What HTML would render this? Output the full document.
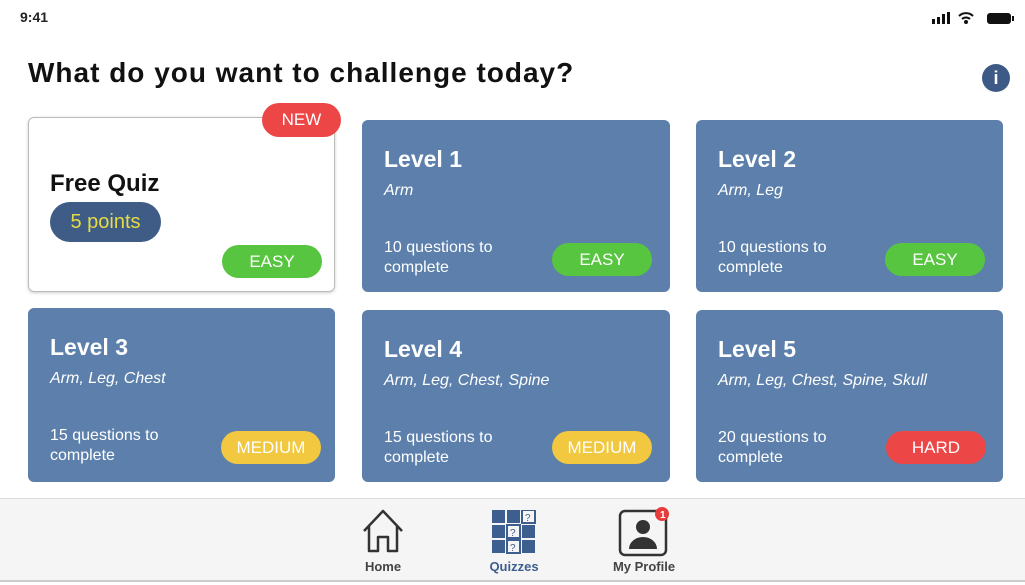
<!DOCTYPE html>
<html><head><style>
*{margin:0;padding:0;box-sizing:border-box}
body{width:1025px;height:585px;background:#fff;font-family:"Liberation Sans",sans-serif;position:relative;overflow:hidden}
.abs{position:absolute}
.card{position:absolute;background:#5c80ab;border-radius:6px;color:#fff}
.card h2{position:absolute;left:22px;top:26px;font-size:23px;font-weight:bold}
.card i{position:absolute;left:22px;top:62px;font-size:16px}
.card .q{position:absolute;left:22px;top:118px;font-size:16px;line-height:20px}
.pill{position:absolute;border-radius:17px;height:33px;width:100px;text-align:center;line-height:33px;font-size:17px;color:#fff}
.easy{background:#57c540}.med{background:#f1c83f}.hard{background:#ec4646}
.nav{position:absolute;left:0;top:498px;width:1025px;height:84px;background:#f5f5f5;border-top:1px solid #ddd;border-bottom:2px solid #ccc}
.nl{position:absolute;top:60px;font-size:13px;font-weight:bold;color:#444;width:100px;text-align:center}
</style></head><body>
<div class="abs" style="left:20px;top:9px;font-size:14px;font-weight:bold;color:#222">9:41</div>
<svg class="abs" style="left:930px;top:10px" width="88" height="16">
<rect x="2" y="9" width="3" height="5" fill="#111"/><rect x="7" y="7" width="3" height="7" fill="#111"/><rect x="12" y="4" width="3" height="10" fill="#111"/><rect x="17" y="2" width="3" height="12" fill="#111"/>
<path d="M29 6a10 10 0 0 1 14 0M32 9a6 6 0 0 1 8 0" stroke="#111" stroke-width="2" fill="none"/><circle cx="36" cy="12" r="2" fill="#111"/>
<rect x="57" y="3" width="24" height="11" rx="3" fill="#111"/><rect x="82" y="6" width="2" height="5" fill="#111"/>
</svg>
<div class="abs" style="left:28px;top:57px;font-size:28px;letter-spacing:1px;font-weight:bold;color:#111">What do you want to challenge today?</div>
<div class="abs" style="left:982px;top:64px;width:28px;height:28px;border-radius:50%;background:#3d5a86;color:#fff;text-align:center;line-height:28px;font-weight:bold;font-size:18px">i</div>

<div class="abs" style="left:28px;top:117px;width:307px;height:175px;border:1.5px solid #bbb;border-radius:6px;box-shadow:0 1px 3px rgba(0,0,0,.2)">
<div class="abs" style="left:21px;top:52px;font-size:24px;font-weight:bold;color:#111">Free Quiz</div>
<div class="abs" style="left:21px;top:84px;width:111px;height:40px;border-radius:20px;background:#3e5c86;color:#e6dc44;font-size:20px;text-align:center;line-height:40px">5 points</div>
<div class="pill easy" style="left:193px;top:127px">EASY</div>
</div>
<div class="pill hard" style="left:262px;top:103px;width:79px;height:34px;line-height:34px">NEW</div>

<div class="card" style="left:362px;top:120px;width:308px;height:172px"><h2>Level 1</h2><i>Arm</i><div class="q">10 questions to<br>complete</div><div class="pill easy" style="left:190px;top:123px">EASY</div></div>
<div class="card" style="left:696px;top:120px;width:307px;height:172px"><h2>Level 2</h2><i>Arm, Leg</i><div class="q">10 questions to<br>complete</div><div class="pill easy" style="left:189px;top:123px">EASY</div></div>
<div class="card" style="left:28px;top:308px;width:307px;height:174px"><h2>Level 3</h2><i>Arm, Leg, Chest</i><div class="q">15 questions to<br>complete</div><div class="pill med" style="left:193px;top:123px">MEDIUM</div></div>
<div class="card" style="left:362px;top:310px;width:308px;height:172px"><h2>Level 4</h2><i>Arm, Leg, Chest, Spine</i><div class="q">15 questions to<br>complete</div><div class="pill med" style="left:190px;top:121px">MEDIUM</div></div>
<div class="card" style="left:696px;top:310px;width:307px;height:172px"><h2>Level 5</h2><i>Arm, Leg, Chest, Spine, Skull</i><div class="q">20 questions to<br>complete</div><div class="pill hard" style="left:190px;top:121px">HARD</div></div>

<div class="nav">
<svg class="abs" style="left:360px;top:8px" width="46" height="48"><path d="M4 24L23 4L42 24M9 19V44H18V30H28V44H37V19" stroke="#333" stroke-width="2.5" fill="none" stroke-linejoin="round"/></svg>
<div class="nl" style="left:333px">Home</div>
<svg class="abs" style="left:492px;top:11px" width="44" height="44" fill="#3d5f8f">
<rect x="0" y="0" width="13" height="13"/><rect x="15" y="0" width="13" height="13"/><rect x="30" y="0" width="13" height="13" fill="none" stroke="#3d5f8f" stroke-width="2"/>
<rect x="0" y="15" width="13" height="13"/><rect x="15" y="15" width="13" height="13" fill="none" stroke="#3d5f8f" stroke-width="2"/><rect x="30" y="15" width="13" height="13"/>
<rect x="0" y="30" width="13" height="13"/><rect x="15" y="30" width="13" height="13" fill="none" stroke="#3d5f8f" stroke-width="2"/><rect x="30" y="30" width="13" height="13"/>
<text x="33" y="11" font-size="10" font-family="Liberation Sans" fill="#3d5f8f">?</text><text x="18" y="26" font-size="10" font-family="Liberation Sans" fill="#3d5f8f">?</text><text x="18" y="41" font-size="10" font-family="Liberation Sans" fill="#3d5f8f">?</text>
</svg>
<div class="nl" style="left:464px;color:#3d5f8f">Quizzes</div>
<svg class="abs" style="left:618px;top:6px" width="56" height="52"><rect x="2" y="6" width="46" height="44" rx="5" stroke="#333" stroke-width="2.5" fill="none"/><circle cx="25" cy="22" r="7" fill="#333"/><path d="M11 44a14 12 0 0 1 28 0Z" fill="#333"/><circle cx="44" cy="9" r="7" fill="#e83c3c"/><text x="42" y="13" font-size="10" fill="#fff" font-family="Liberation Sans" font-weight="bold">1</text></svg>
<div class="nl" style="left:594px">My Profile</div>
</div>
</body></html>
